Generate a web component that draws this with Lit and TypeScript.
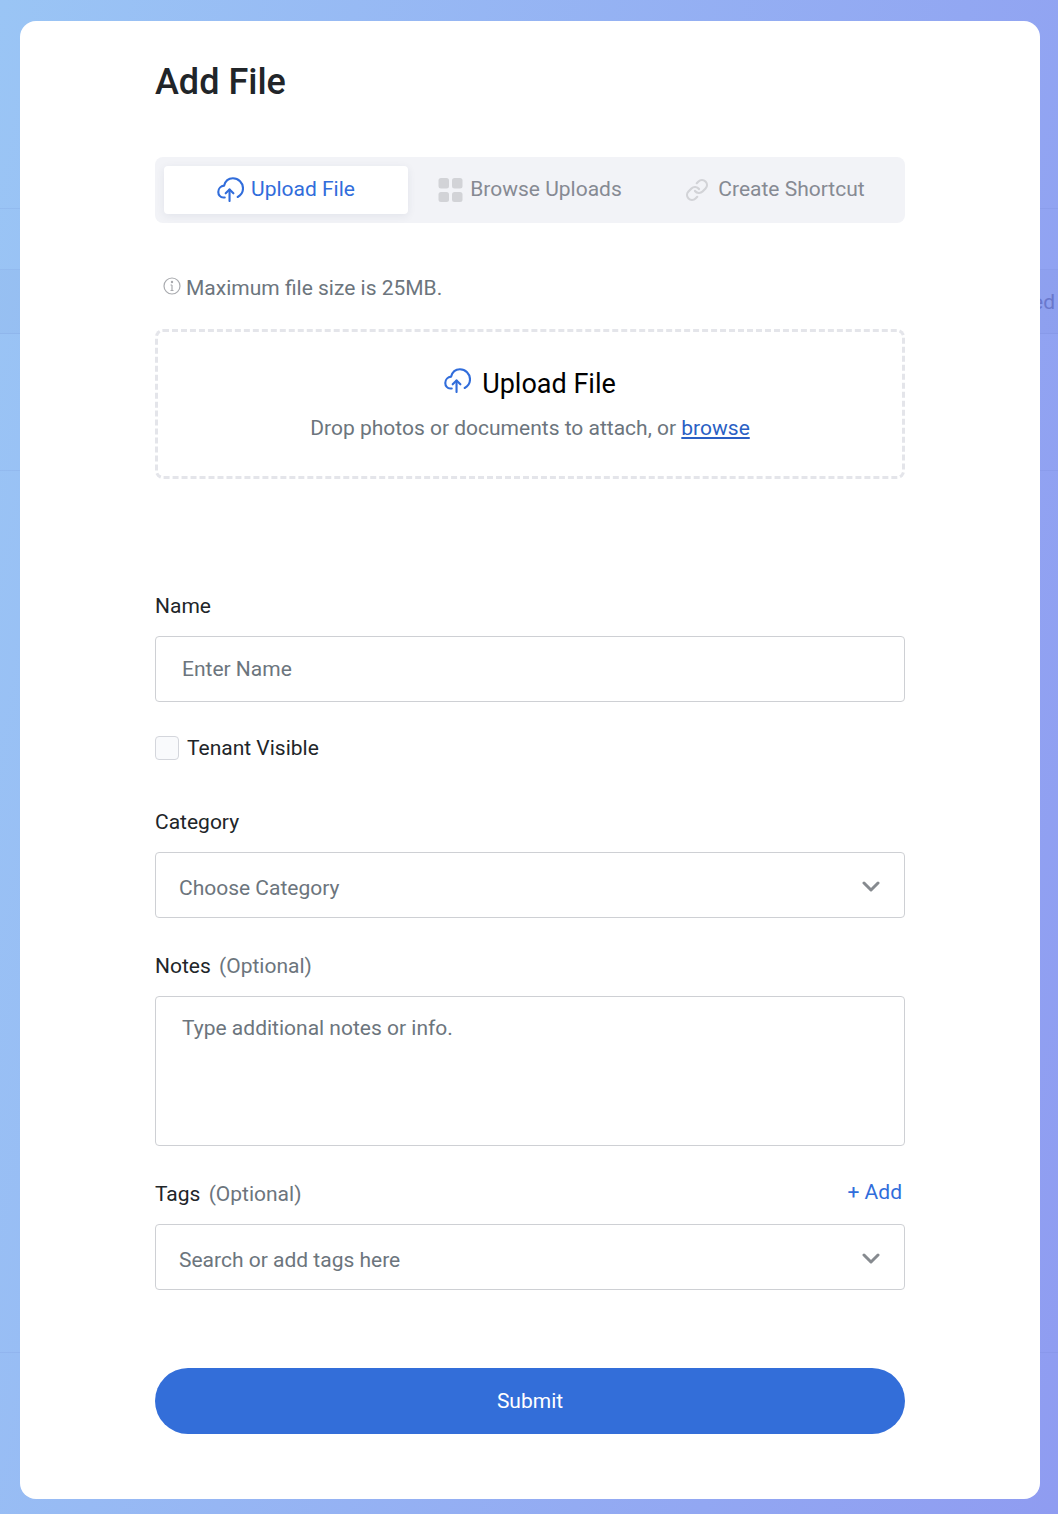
import { LitElement, html, css, svg } from "lit";
import { customElement } from "lit/decorators.js";

const cloud = (w: number, h: number, sw: number) => html`<svg class="ico" width=${w} height=${h} viewBox="0 0 28 26" fill="none" stroke="#316ddb" stroke-width=${sw} stroke-linecap="round" stroke-linejoin="round">
  ${svg`<path d="M8 21.3H6.5C3.5 21.3 1.3 18.7 1.3 15.5C1.3 12 4 9.3 7.3 9C8.5 4.5 12 1.3 16.5 1.3C22.3 1.3 27 6 27 11.8C27 15.5 25 19 21.5 20.8" />
  <path d="M13 25V13" /><path d="M9 17l4-4 4 4" />`}
</svg>`;

@customElement("app-root")
export class AppRoot extends LitElement {
  static styles = css`
    :host {
      display: block;
      height: 1514px;
      font-family: Roboto, "Liberation Sans", sans-serif;
      color: #212529;
    }
    * { box-sizing: border-box; }
    .page {
      position: relative;
      height: 1514px;
      overflow: hidden;
      background: linear-gradient(100deg, #9ac5f5 0%, #8f9cf1 100%);
    }
    .behind {
      position: absolute;
      inset: 0;
      display: flex;
      flex-direction: column;
      color: #6a78cc;
      font-size: 21px;
    }
    .rule { border-bottom: 1px solid rgba(90, 110, 190, 0.1); }
    .r1 { height: 209px; }
    .r2 { height: 61px; }
    .r3 {
      height: 64px;
      display: flex;
      justify-content: flex-end;
      align-items: center;
      padding: 0 3px 0 0;
      background: rgba(90, 110, 190, 0.05);
    }
    .r4 { height: 137px; }
    .r5 { height: 882px; }
    .card {
      position: absolute;
      left: 20px;
      top: 21px;
      width: 1020px;
      height: 1478px;
      background: #fff;
      border-radius: 16px;
      padding: 0 135px;
      display: flex;
      flex-direction: column;
    }
    h1 {
      margin: 38px 0 0;
      font-size: 36px;
      line-height: 46px;
      font-weight: 500;
      color: #212529;
    }
    .tabs {
      margin-top: 52px;
      height: 66px;
      padding: 9px;
      background: #f2f3f7;
      border-radius: 8px;
      display: grid;
      grid-template-columns: repeat(3, 1fr);
    }
    .tab {
      display: flex;
      align-items: center;
      justify-content: center;
      gap: 7px;
      font-size: 21px;
      color: #868a93;
      border-radius: 4px;
      padding-bottom: 3px;
    }
    .tab svg { margin-top: 2px; }
    .tab.active {
      background: #fff;
      color: #316ddb;
      box-shadow: 0 2px 8px rgba(40, 50, 90, 0.08);
    }
    .tab .link { margin-left: 2px; margin-right: 2px; }
    .ico { flex: none; display: block; }
    .note {
      margin-top: 51px;
      height: 28px;
      display: flex;
      align-items: center;
      gap: 5px;
      padding-left: 8px;
      font-size: 21px;
      color: #6c757d;
    }
    .note svg { margin-top: -4px; }
    .drop {
      margin-top: 27px;
      height: 150px;
      border: 3px dashed #e4e5ea;
      border-radius: 8px;
      display: flex;
      flex-direction: column;
      align-items: center;
    }
    .drop-title {
      margin-top: 34px;
      height: 36px;
      display: flex;
      align-items: center;
      gap: 11px;
      font-size: 27px;
      color: #000;
    }
    .drop-title svg { margin-top: -8px; }
    .drop-sub {
      margin-top: 12px;
      font-size: 21px;
      line-height: 28px;
      color: #6c757d;
    }
    .drop-sub a { color: #2a5fc4; text-decoration: underline; }
    .label {
      font-size: 21px;
      line-height: 28px;
      color: #212529;
    }
    .label span { color: #6c757d; margin-left: 3px; }
    .name-label { margin-top: 113px; }
    .field {
      margin-top: 16px;
      height: 66px;
      border: 1px solid #ced0d4;
      border-radius: 4px;
      display: flex;
      align-items: center;
      font-size: 21px;
      color: #6c757d;
      padding: 0 26px;
    }
    .field.select { padding: 6px 23px 0; justify-content: space-between; }
    .field.select svg { margin: -4px 1px 0 0; }
    .check {
      margin-top: 32px;
      height: 28px;
      display: flex;
      align-items: center;
      gap: 8px;
      font-size: 21px;
      color: #212529;
    }
    .box {
      width: 24px;
      height: 24px;
      border: 1px solid #d4d6dc;
      border-radius: 4px;
      background: #f9fafc;
    }
    .cat-label { margin-top: 46px; }
    .notes-label { margin-top: 34px; }
    .area {
      margin-top: 16px;
      height: 150px;
      border: 1px solid #ced0d4;
      border-radius: 4px;
      font-size: 21px;
      line-height: 28px;
      color: #6c757d;
      padding: 17px 26px;
    }
    .tags-row {
      margin-top: 34px;
      display: flex;
      justify-content: space-between;
      align-items: flex-start;
    }
    .add {
      font-size: 21px;
      line-height: 28px;
      color: #316ddb;
      margin: -2px 3px 0 0;
    }
    .submit {
      margin-top: 78px;
      height: 66px;
      border-radius: 33px;
      background: #336ed9;
      color: #fff;
      font-size: 21px;
      display: flex;
      align-items: center;
      justify-content: center;
    }
  `;

  private chevron() {
    return html`<svg class="ico" width="18" height="11" viewBox="0 0 18 11" fill="none" stroke="#868a8f" stroke-width="3" stroke-linecap="round" stroke-linejoin="round"><path d="M2 2l7 7 7-7" /></svg>`;
  }

  render() {
    return html`
      <div class="page">
        <div class="behind">
          <div class="rule r1"></div>
          <div class="rule r2"></div>
          <div class="rule r3">ed</div>
          <div class="rule r4"></div>
          <div class="rule r5"></div>
        </div>
        <main class="card">
          <h1>Add File</h1>
          <div class="tabs">
            <div class="tab active">${cloud(27, 25, 2.2)}Upload File</div>
            <div class="tab">
              <svg class="ico" width="25" height="24" viewBox="0 0 25 24" fill="#d2d3d7">
                <rect x="0.5" y="0" width="10.5" height="10.5" rx="2.5" />
                <rect x="14" y="0" width="10.5" height="10.5" rx="2.5" />
                <rect x="0.5" y="14" width="10.5" height="10" rx="2.5" />
                <rect x="14" y="14" width="10.5" height="10" rx="2.5" />
              </svg>
              Browse Uploads
            </div>
            <div class="tab">
              <svg class="ico link" width="24" height="24" viewBox="0 0 24 24" fill="none" stroke="#d2d3d7" stroke-width="2.2" stroke-linecap="round" stroke-linejoin="round">
                <path d="M10 13a5 5 0 0 0 7.54.54l3-3a5 5 0 0 0-7.07-7.07l-1.72 1.71" />
                <path d="M14 11a5 5 0 0 0-7.54-.54l-3 3a5 5 0 0 0 7.07 7.07l1.71-1.71" />
              </svg>
              Create Shortcut
            </div>
          </div>
          <div class="note">
            <svg class="ico" width="18" height="18" viewBox="0 0 18 18" fill="none" stroke="#a9abaf" stroke-width="1.2">
              <circle cx="9" cy="9" r="8" />
              <path d="M9 8v5.5M7.5 8H9M7.5 13.5h3" />
              <circle cx="9" cy="5" r="0.6" fill="#a9abaf" />
            </svg>
            Maximum file size is 25MB.
          </div>
          <div class="drop">
            <div class="drop-title">${cloud(27, 25, 2.2)}Upload File</div>
            <div class="drop-sub">Drop photos or documents to attach, or <a>browse</a></div>
          </div>
          <div class="label name-label">Name</div>
          <div class="field">Enter Name</div>
          <div class="check"><div class="box"></div>Tenant Visible</div>
          <div class="label cat-label">Category</div>
          <div class="field select">Choose Category ${this.chevron()}</div>
          <div class="label notes-label">Notes <span>(Optional)</span></div>
          <div class="area">Type additional notes or info.</div>
          <div class="tags-row">
            <div class="label">Tags <span>(Optional)</span></div>
            <div class="add">+ Add</div>
          </div>
          <div class="field select">Search or add tags here ${this.chevron()}</div>
          <div class="submit">Submit</div>
        </main>
      </div>
    `;
  }
}
